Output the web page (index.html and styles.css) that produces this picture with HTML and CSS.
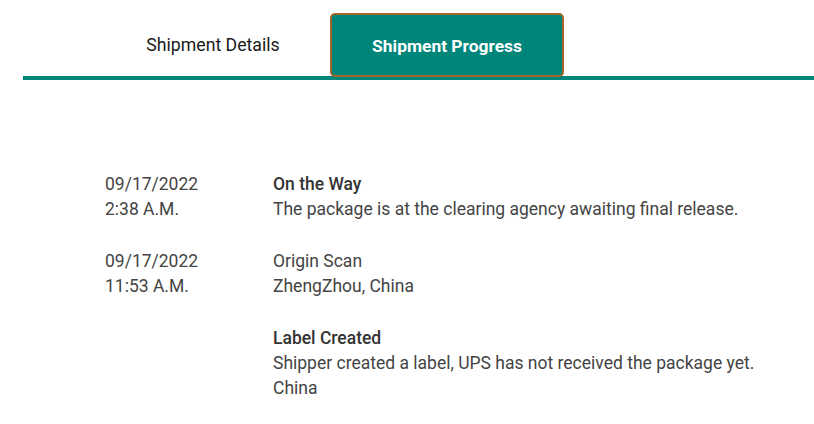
FILE: index.html
```html
<!DOCTYPE html>
<html lang="en">
<head>
    <meta charset="UTF-8">
    <meta name="viewport" content="width=device-width, initial-scale=1.0">
    <title>Shipment Progress</title>
    <link rel="stylesheet" href="styles.css">
</head>
<body>
    <div class="tabs">
        <div class="tab">Shipment Details</div>
        <div class="tab active">Shipment Progress</div>
    </div>
    <div class="progress">
        <div class="step">
            <div class="step-date">09/17/2022<br>2:38 A.M.</div>
            <div class="step-info">
                <div class="step-title">On the Way</div>
                <div>The package is at the clearing agency awaiting final release.</div>
            </div>
        </div>
        <div class="step">
            <div class="step-date">09/17/2022<br>11:53 A.M.</div>
            <div class="step-info">
                <div>Origin Scan</div>
                <div>ZhengZhou, China</div>
            </div>
        </div>
        <div class="step">
            <div class="step-date"></div>
            <div class="step-info">
                <div class="step-title">Label Created</div>
                <div>Shipper created a label, UPS has not received the package yet.</div>
                <div>China</div>
            </div>
        </div>
    </div>
</body>
</html>
```

FILE: styles.css
```css
body {
    font-family: Roboto, Arial, sans-serif;
    margin: 0;
    background-color: white;
    color: #333;
}

.tabs {
    display: flex;
    margin: 13px 0 0 23px;
    padding-left: 73px;
    border-bottom: 4px solid #00857a;
}

    .tabs .tab {
        width: 234px;
        height: 60px;
        display: flex;
        justify-content: center;
        align-items: center;
        padding-top: 4px;
        font-size: 17.7px;
        color: #1a1a1a;
        box-sizing: border-box;
        margin-bottom: 1px;
    }

    .tabs .tab.active {
        height: 64px;
        margin-bottom: -1px;
        padding-top: 1px;
        background-color: #00857a;
        border: 2px solid #a5652a;
        border-radius: 5px;
        color: white;
        font-weight: bold;
        font-size: 17.4px;
    }

.progress {
    padding: 92px 0 0 105px;
}

    .progress .step {
        display: flex;
        font-size: 17.5px;
        line-height: 25px;
        margin-bottom: 27px;
    }

    .progress .step-date {
        width: 168px;
        color: #444;
    }

    .progress .step-info {
        color: #444;
    }

    .progress .step-title {
        font-weight: 500;
        color: #333;
    }
```
